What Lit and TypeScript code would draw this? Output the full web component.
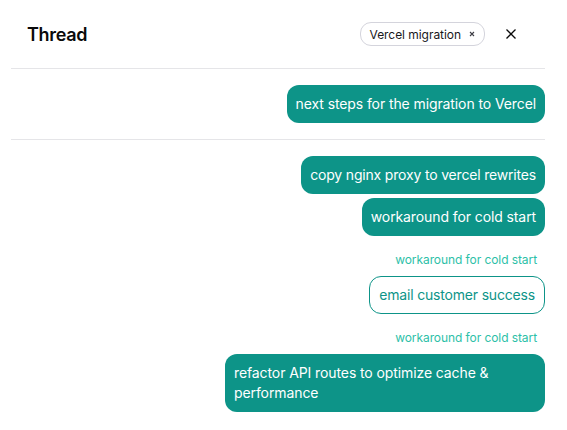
import { LitElement, html, css } from 'lit';
import { customElement } from 'lit/decorators.js';

@customElement('app-root')
export class AppRoot extends LitElement {
  static styles = css`
    :host {
      display: block;
      width: 567px;
      height: 430px;
      box-sizing: border-box;
      padding: 0 22px 0 11px;
      background: #fff;
      font-family: Inter, "Liberation Sans", sans-serif;
      overflow: hidden;
    }

    .header {
      display: flex;
      align-items: center;
      height: 68px;
      padding: 0 28px 0 16px;
      border-bottom: 1px solid #e5e5e8;
    }

    .title {
      font-size: 18px;
      font-weight: 600;
      letter-spacing: -0.3px;
      color: #0a0a0a;
      flex: 1;
    }

    .tag {
      display: flex;
      align-items: center;
      gap: 8px;
      height: 22px;
      padding: 0 9px;
      border: 1px solid #d4d4dc;
      border-radius: 11px;
      font-size: 12px;
      letter-spacing: -0.05px;
      color: #18181b;
    }

    .close {
      display: block;
      margin-left: 20px;
    }

    .group {
      display: flex;
      flex-direction: column;
      align-items: flex-end;
      gap: 4px;
      padding: 16px 0;
    }

    .group + .group {
      border-top: 1px solid #e5e5e8;
    }

    .bubble {
      box-sizing: border-box;
      min-height: 38px;
      padding: 9px;
      border-radius: 12px;
      background: #0d9488;
      color: #fff;
      font-size: 14px;
      line-height: 20px;
      letter-spacing: -0.1px;
      max-width: 320px;
    }

    .bubble.tight {
      letter-spacing: -0.18px;
    }

    .bubble.outline {
      background: #fff;
      color: #0d9488;
      border: 1px solid #0d9488;
      padding: 8px 9px;
    }

    .reply {
      font-size: 12px;
      line-height: 16px;
      letter-spacing: -0.08px;
      color: #2dbfa8;
      padding-right: 8px;
      margin-top: 12px;
      margin-bottom: 4px;
    }
  `;

  render() {
    return html`
      <div class="header">
        <div class="title">Thread</div>
        <div class="tag">
          Vercel migration
          <svg width="6" height="6" viewBox="0 0 6 6" fill="none" stroke="#3f3f46" stroke-width="1.1">
            <path d="M1 1l4 4M5 1L1 5"></path>
          </svg>
        </div>
        <svg class="close" width="12" height="12" viewBox="0 0 12 12" fill="none" stroke="#0a0a0a" stroke-width="1.3">
          <path d="M1.5 1.5l9 9M10.5 1.5l-9 9"></path>
        </svg>
      </div>
      <div class="group">
        <div class="bubble">next steps for the migration to Vercel</div>
      </div>
      <div class="group">
        <div class="bubble tight">copy nginx proxy to vercel rewrites</div>
        <div class="bubble">workaround for cold start</div>
        <div class="reply">workaround for cold start</div>
        <div class="bubble outline tight">email customer success</div>
        <div class="reply">workaround for cold start</div>
        <div class="bubble">refactor API routes to optimize cache &amp; performance</div>
      </div>
    `;
  }
}
